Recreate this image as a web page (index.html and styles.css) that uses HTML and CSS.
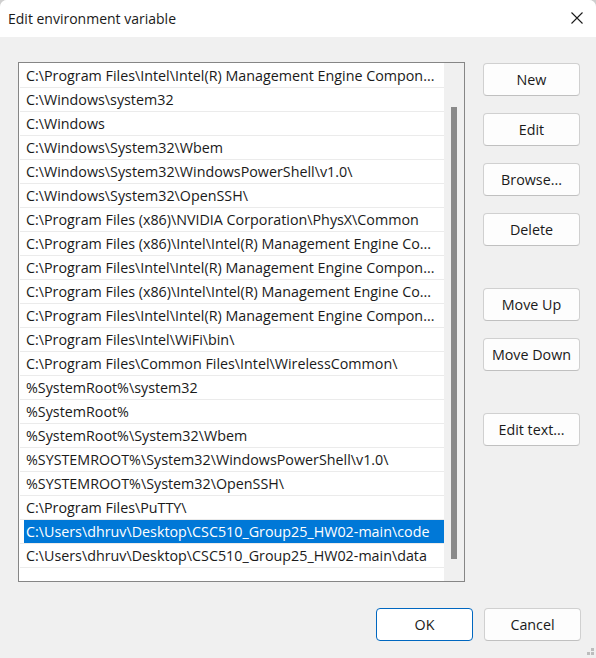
FILE: index.html
```html
<!DOCTYPE html>
<html>
<head>
<meta charset="utf-8">
<title>Edit environment variable</title>
<link rel="stylesheet" href="styles.css">
</head>
<body>
<div class="window">
  <div class="titlebar">
    <span class="title">Edit environment variable</span>
    <span class="close">
      <svg width="12" height="12" viewBox="0 0 12 12"><path d="M0.5 0.5 L11.5 11.5 M11.5 0.5 L0.5 11.5" stroke="#1b1b1b" stroke-width="1.1" fill="none"/></svg>
    </span>
  </div>
  <div class="content">
    <div class="main">
      <div class="listbox">
        <div class="rows">
          <div class="row"><span class="cell">C:\Program Files\Intel\Intel(R) Management Engine Compon...</span></div>
          <div class="row"><span class="cell">C:\Windows\system32</span></div>
          <div class="row"><span class="cell">C:\Windows</span></div>
          <div class="row"><span class="cell">C:\Windows\System32\Wbem</span></div>
          <div class="row"><span class="cell">C:\Windows\System32\WindowsPowerShell\v1.0\</span></div>
          <div class="row"><span class="cell">C:\Windows\System32\OpenSSH\</span></div>
          <div class="row"><span class="cell">C:\Program Files (x86)\NVIDIA Corporation\PhysX\Common</span></div>
          <div class="row"><span class="cell">C:\Program Files (x86)\Intel\Intel(R) Management Engine Co...</span></div>
          <div class="row"><span class="cell">C:\Program Files\Intel\Intel(R) Management Engine Compon...</span></div>
          <div class="row"><span class="cell">C:\Program Files (x86)\Intel\Intel(R) Management Engine Co...</span></div>
          <div class="row"><span class="cell">C:\Program Files\Intel\Intel(R) Management Engine Compon...</span></div>
          <div class="row"><span class="cell">C:\Program Files\Intel\WiFi\bin\</span></div>
          <div class="row"><span class="cell">C:\Program Files\Common Files\Intel\WirelessCommon\</span></div>
          <div class="row"><span class="cell">%SystemRoot%\system32</span></div>
          <div class="row"><span class="cell">%SystemRoot%</span></div>
          <div class="row"><span class="cell">%SystemRoot%\System32\Wbem</span></div>
          <div class="row"><span class="cell">%SYSTEMROOT%\System32\WindowsPowerShell\v1.0\</span></div>
          <div class="row"><span class="cell">%SYSTEMROOT%\System32\OpenSSH\</span></div>
          <div class="row"><span class="cell">C:\Program Files\PuTTY\</span></div>
          <div class="row selected"><span class="cell">C:\Users\dhruv\Desktop\CSC510_Group25_HW02-main\code</span></div>
          <div class="row"><span class="cell">C:\Users\dhruv\Desktop\CSC510_Group25_HW02-main\data</span></div>
        </div>
        <div class="scrollbar"><div class="thumb"></div></div>
      </div>
      <div class="side">
        <button class="btn">New</button>
        <button class="btn">Edit</button>
        <button class="btn">Browse...</button>
        <button class="btn">Delete</button>
        <button class="btn group">Move Up</button>
        <button class="btn">Move Down</button>
        <button class="btn group">Edit text...</button>
      </div>
    </div>
    <div class="footer">
      <button class="btn primary">OK</button>
      <button class="btn">Cancel</button>
    </div>
  </div>
  <div class="grip">
    <span class="dot d1"></span><span class="dot d2"></span><span class="dot d3"></span>
  </div>
</div>
</body>
</html>
```
FILE: styles.css
```css
html, body {
  margin: 0;
  padding: 0;
  background: #cfcfcf;
}
body {
  width: 596px;
  height: 658px;
  overflow: hidden;
  font-family: "Open Sans", "Noto Sans", sans-serif;
  font-size: 14.3px;
  color: #1a1a1a;
}
.window {
  position: relative;
  width: 596px;
  height: 658px;
  background: #f0f0f0;
  border-radius: 7px 7px 0 0;
  overflow: hidden;
}
.titlebar {
  height: 37px;
  background: #ffffff;
  display: flex;
  align-items: center;
  justify-content: space-between;
  padding-left: 8px;
  box-sizing: border-box;
}
.title {
  font-size: 14px;
  color: #1a1a1a;
  margin-top: -1px;
}
.close {
  width: 12px;
  height: 12px;
  margin-right: 13px;
  margin-top: -1px;
  display: flex;
}
.content {
  padding: 25px 15px 0 18px;
}
.main {
  display: flex;
  gap: 18px;
}
.listbox {
  width: 447px;
  height: 520px;
  box-sizing: border-box;
  border: 1px solid #868686;
  background: #ffffff;
  display: flex;
  padding-top: 1px;
}
.rows {
  width: 424px;
  margin-left: 1px;
}
.row {
  height: 23px;
  border-bottom: 1px solid #ebebeb;
  display: flex;
}
.cell {
  flex: 1;
  margin-left: 4px;
  padding-left: 2px;
  line-height: 23px;
  white-space: nowrap;
  overflow: hidden;
}
.selected .cell {
  background: #0078d7;
  color: #ffffff;
}
.scrollbar {
  width: 20px;
  background: #f0f0f0;
  margin-top: -1px;
  padding-top: 44px;
  box-sizing: border-box;
}
.thumb {
  width: 6px;
  height: 452px;
  margin-left: 7px;
  background: #8a8a8a;
}
.side {
  display: flex;
  flex-direction: column;
  gap: 17px;
  padding-top: 1px;
}
.btn {
  width: 97px;
  height: 33px;
  box-sizing: border-box;
  border: 1px solid #d0d0d0;
  border-bottom-color: #c0c0c0;
  border-radius: 4px;
  background: #fdfdfd;
  font-family: "Open Sans", "Noto Sans", sans-serif;
  font-size: 14.3px;
  color: #1a1a1a;
  padding: 0;
}
.side .group {
  margin-top: 25px;
}
.footer {
  display: flex;
  justify-content: flex-end;
  gap: 11px;
  margin-top: 26px;
}
.primary {
  border: 1px solid #0067c0;
  background: #ffffff;
}
.grip {
  position: absolute;
  right: 0;
  bottom: 0;
  width: 10px;
  height: 10px;
}
.dot {
  position: absolute;
  width: 3px;
  height: 3px;
  background: #bdbdbd;
}
.d1 { left: 5px; top: 0px; }
.d2 { left: 1px; top: 4px; }
.d3 { left: 5px; top: 4px; }
```
